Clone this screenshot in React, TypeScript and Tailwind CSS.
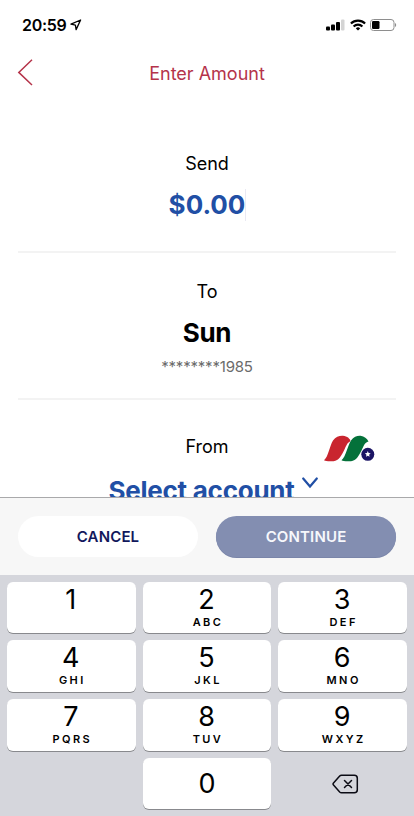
import { useState } from "react";
import clsx from "clsx";

type KeyDef = {
  digit: string;
  letters?: string;
};

const KEYS: KeyDef[] = [
  { digit: "1" },
  { digit: "2", letters: "ABC" },
  { digit: "3", letters: "DEF" },
  { digit: "4", letters: "GHI" },
  { digit: "5", letters: "JKL" },
  { digit: "6", letters: "MNO" },
  { digit: "7", letters: "PQRS" },
  { digit: "8", letters: "TUV" },
  { digit: "9", letters: "WXYZ" },
];

const formatAmount = (cents: number) => `$${(cents / 100).toFixed(2)}`;

function StatusBar() {
  return (
    <div className="flex h-[50px] items-center justify-between pl-[22px] pr-[17px]">
      <div className="flex items-center gap-[4px]">
        <span className="text-[16px] font-semibold leading-5 tracking-[-0.3px]">20:59</span>
        <svg width="12" height="12" viewBox="0 0 12 12" fill="none" stroke="currentColor" strokeWidth="1.3" strokeLinejoin="round">
          <path d="M10.600 1 1 5.200l4.400.9.700 4.500z" />
        </svg>
      </div>
      <div className="flex items-center">
        <svg width="19" height="12" viewBox="0 0 19 12">
          <rect x="0" y="7.5" width="4" height="4" rx="1" />
          <rect x="5" y="5.5" width="4" height="6" rx="1" />
          <rect x="10" y="3" width="4" height="8.5" rx="1" />
          <rect x="15" y="0.5" width="3.5" height="11" rx="1" fill="#d4d4d4" />
        </svg>
        <svg className="ml-[5px]" width="16" height="12" viewBox="0 0 16 12" fill="none" stroke="#000" strokeWidth="2.1">
          <path d="M.9 4.600a10 10 0 0 1 14.200 0" />
          <path d="M3.600 7.500a6.200 6.200 0 0 1 8.800 0" />
          <path d="M8 11.600 5.800 9.400a3.100 3.100 0 0 1 4.400 0z" fill="#000" stroke="none" />
        </svg>
        <svg className="ml-[4px]" width="27" height="12" viewBox="0 0 27 12">
          <rect x="0.5" y="0.5" width="23.5" height="11" rx="3" fill="none" stroke="#8e8e8e" />
          <rect x="2" y="2" width="7.5" height="8" rx="1.2" />
          <path d="M25 4c1.600.5 1.600 3.500 0 4z" fill="#8e8e8e" />
        </svg>
      </div>
    </div>
  );
}

function BankLogo() {
  return (
    <svg width="51" height="27" viewBox="0 0 51 27">
      <path d="M0 25.300C4.500 21.500 5.500 11 9 5.500C11.800 1.500 15.500.6 19 .8C23.500 1.200 25.500 3.500 27 6.300C23 7.500 22.500 10.500 20 15.500C16 23.500 13.500 26.300 7.500 26.300C4 26.400 1.500 26.200 0 25.300Z" fill="#c9252f" />
      <path d="M17.500 25.300C22 21.500 23.400 11 27 5.500C29.800 1.500 33.200.6 36.500.8C40.500 1.200 42.800 3.500 44.500 6.500C40.500 7.500 40 10.500 37.500 15.500C33.500 23.500 31 26.300 25 26.300C21.500 26.400 19 26.200 17.500 25.300Z" fill="#04713a" stroke="#fff" strokeWidth="1" paintOrder="stroke" />
      <circle cx="43.800" cy="19.300" r="6.500" fill="#1b1464" />
      <path d="m43.800 16.100.8 2 2.100.2-1.600 1.400.5 2.100-1.800-1.100-1.800 1.100.5-2.100-1.600-1.400 2.100-.2z" fill="#fff" />
    </svg>
  );
}

export default function App() {
  const [cents, setCents] = useState(0);

  const pressDigit = (digit: string) => {
    setCents((current) => Math.min(current * 10 + Number(digit), 99999999));
  };

  return (
    <div className="flex h-[816px] w-[414px] flex-col overflow-hidden bg-white font-['Inter',sans-serif] text-black">
      <StatusBar />

      <header className="grid h-[46px] grid-cols-[60px_1fr_60px] items-center">
        <button type="button" aria-label="Back" className="pl-[17px] text-[#b5344a]">
          <svg width="16" height="28" viewBox="0 0 16 28" fill="none" stroke="currentColor" strokeWidth="1.500">
            <path d="M15 .8 1.800 13.400 15 26" />
          </svg>
        </button>
        <h1 className="pt-px text-center text-[18px] leading-6 text-[#b5344a]">Enter Amount</h1>
      </header>

      <main className="min-h-0 flex-1 overflow-hidden px-[18px] text-center">
        <section className="h-[157px] border-b-2 border-[#f3f3f3] pt-[56px]">
          <p className="text-[18px] leading-6">Send</p>
          <div className="mt-[12px] flex items-center justify-center">
            <span className="text-[26px] font-bold leading-[34px] text-[#214fa5]">{formatAmount(cents)}</span>
            <span className="-mr-px h-8 w-px bg-[#e9e9f2]" />
          </div>
        </section>

        <section className="h-[147px] border-b-2 border-[#f3f3f3] pt-[27px]">
          <p className="text-[18px] leading-6">To</p>
          <p className="mt-[12px] text-[26px] font-bold leading-[34px] tracking-[-0.3px]">Sun</p>
          <p className="mt-[7px] text-[15px] leading-5 tracking-[-0.2px] text-[#6b6b6b]">********1985</p>
        </section>

        <section className="pt-[35px]">
          <div className="grid h-7 grid-cols-3 items-start">
            <p className="col-start-2 text-[18px] leading-6">From</p>
            <div className="justify-self-end pr-[21px]">
              <BankLogo />
            </div>
          </div>
          <button type="button" className="mt-[11px] flex w-full justify-center gap-[8px] pl-[12px] text-[#214fa5]">
            <span className="text-[26px] font-bold leading-[34px] tracking-[-0.25px]">Select account</span>
            <svg className="-ml-px mt-[3px]" width="16" height="12" viewBox="0 0 16 12" fill="none" stroke="currentColor" strokeWidth="2.200" strokeLinecap="round">
              <path d="m1.200 1.500 6.800 8 6.800-8" />
            </svg>
          </button>
        </section>
      </main>

      <div className="flex h-[78px] items-start gap-[18px] border-t border-[#a9a9ab] bg-[#f7f7f7] px-[18px] pt-[18px] text-[15px] font-semibold tracking-[0.15px]">
        <button type="button" onClick={() => setCents(0)} className="h-[41px] flex-1 rounded-full bg-white pt-px text-[#12185c]">
          CANCEL
        </button>
        <button type="button" className="h-[41px] flex-1 rounded-full bg-[#838eb1] pt-px text-[#f7f8fc] shadow-[0_1px_0_#7a85a9]">
          CONTINUE
        </button>
      </div>

      <div className="grid h-[241px] grid-cols-3 grid-rows-[51px_52px_52px_51px] gap-x-[7px] gap-y-[7px] bg-[#d5d6dc] px-[7px] pt-[7px]">
        {KEYS.map(({ digit, letters }) => (
          <button
            key={digit}
            type="button"
            onClick={() => pressDigit(digit)}
            className="flex flex-col items-center rounded-[6px] bg-white pt-[2px] shadow-[0_1px_0_#88898d]"
          >
            <span className="pr-px text-[27px] leading-8">{digit}</span>
            <span className={clsx("pl-[2px] text-[11px] font-semibold leading-[12px] tracking-[2.4px]", !letters && "hidden")}>
              {letters}
            </span>
          </button>
        ))}
        <button
          type="button"
          onClick={() => pressDigit("0")}
          className="col-start-2 rounded-[6px] bg-white pt-px text-[27px] leading-8 shadow-[0_1px_0_#88898d]"
        >
          0
        </button>
        <button
          type="button"
          aria-label="Delete"
          onClick={() => setCents((current) => Math.floor(current / 10))}
          className="flex items-center justify-center pl-[6px]"
        >
          <svg width="27" height="20" viewBox="0 0 27 20" fill="none" stroke="#0b0b14" strokeWidth="1.500" strokeLinecap="round" strokeLinejoin="round">
            <path d="M9.500 1.200h12.800a3 3 0 0 1 3 3v11.600a3 3 0 0 1-3 3H9.500a2.500 2.500 0 0 1-1.800-.8L1.500 11a1.500 1.500 0 0 1 0-2l6.200-7a2.500 2.500 0 0 1 1.800-.8z" />
            <path d="m12.500 6.500 7 7m0-7-7 7" />
          </svg>
        </button>
      </div>
    </div>
  );
}
